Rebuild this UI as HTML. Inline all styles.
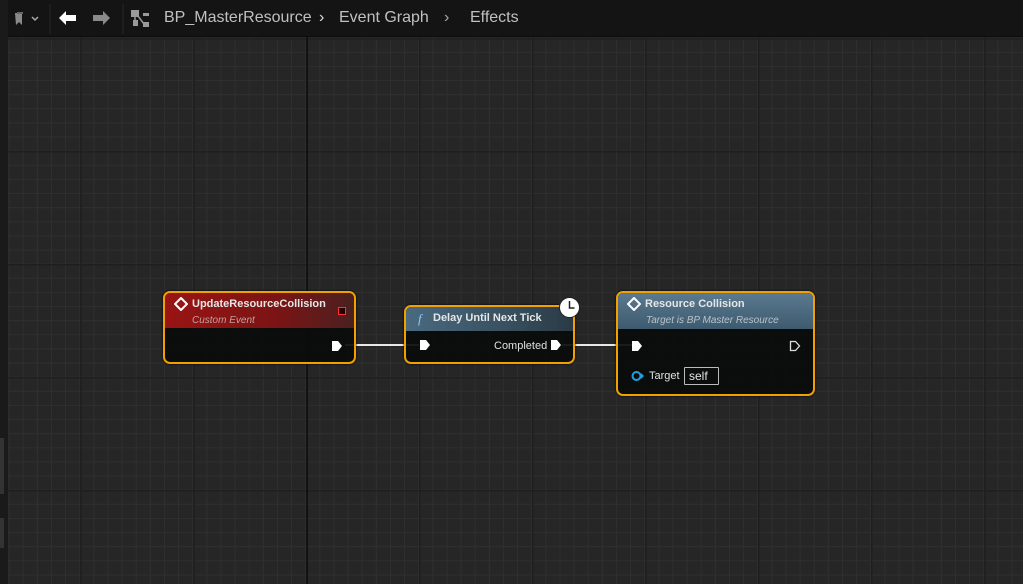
<!DOCTYPE html>
<html><head><meta charset="utf-8"><style>
*{margin:0;padding:0;box-sizing:border-box}
body{width:1023px;height:584px;overflow:hidden;background:#262626;font-family:"Liberation Sans",sans-serif;position:relative}
.grid{position:absolute;left:8px;top:37px;right:0;bottom:0;
background:
linear-gradient(to right,#1f1f1f 1.5px,transparent 1.5px) 72px 0/113px 113px,
linear-gradient(to bottom,#1f1f1f 1.5px,transparent 1.5px) 0 1px/113px 113px,
linear-gradient(to right,#2f2f2f 1px,transparent 1px) 0.6px 0/14.125px 14.125px,
linear-gradient(to bottom,#2f2f2f 1px,transparent 1px) 0 0.7px/14.125px 14.125px,#262626}
.left{position:absolute;left:0;top:0;width:8px;height:584px;background:#1a1a1a}
.tb{position:absolute;left:8px;top:0;right:0;height:37px;background:#141414;border-bottom:1px solid #0c0c0c}
.sep{position:absolute;top:4px;width:2px;height:30px;background:#1e1e1e}
.t{position:absolute;color:#c0c0c0;font-size:16px;top:9px}
.node{position:absolute;border:2px solid #f0a000;border-radius:7px;background:rgba(10,12,12,.93);overflow:hidden;box-shadow:0 0 2px #000}
.hd{position:absolute;left:0;right:0;top:0}
.title{position:absolute;color:#e6e6e6;font-weight:bold;font-size:11px}
.sub{position:absolute;color:#c0a0a0;font-style:italic;font-size:10px}
.wire{position:absolute;height:2px;background:#e8e8e8}
.pin{position:absolute}
</style></head><body>
<div class="grid"></div>
<div style="position:absolute;left:306px;top:37px;width:1.5px;height:547px;background:#121212"></div>
<div class="left"></div>
<div style="position:absolute;left:0;top:438px;width:4px;height:56px;background:#333"></div>
<div style="position:absolute;left:0;top:518px;width:4px;height:30px;background:#333"></div>
<div class="tb">
<svg style="position:absolute;left:6px;top:11px" width="30" height="16"><path d="M1 2h7v12l-3-3-3 3z" fill="#8a8a8a"/><path d="M3 1h6v2H3z" fill="#666"/><path d="M18 6l3 3 3-3" stroke="#aaa" stroke-width="1.5" fill="none"/></svg>
<div class="sep" style="left:41px"></div>
<svg style="position:absolute;left:50px;top:10px" width="20" height="16"><path d="M1 8l7-7v4h10v6H8v4z" fill="#fff"/></svg>
<svg style="position:absolute;left:83px;top:10px" width="20" height="16"><path d="M19 8l-7-7v4H2v6h10v4z" fill="#8a8a8a"/></svg>
<div class="sep" style="left:114px"></div>
<svg style="position:absolute;left:122px;top:9px" width="22" height="20"><rect x="1" y="1" width="8" height="7" fill="#9a9a9a"/><rect x="13" y="4" width="6" height="3" fill="#9a9a9a"/><rect x="13" y="13" width="6" height="5" fill="#9a9a9a"/><rect x="3" y="11" width="5" height="6" fill="#9a9a9a"/><path d="M8 7l6 8M5 8v4" stroke="#9a9a9a" stroke-width="1.5"/></svg>
<div class="t" style="left:156px">BP_MasterResource</div>
<div class="t" style="left:311px;color:#ddd">›</div>
<div class="t" style="left:331px">Event Graph</div>
<div class="t" style="left:436px;color:#aaa">›</div>
<div class="t" style="left:462px">Effects</div>
</div>

<div class="wire" style="left:345px;top:344px;width:74px"></div>
<div class="wire" style="left:562px;top:344px;width:71px"></div>

<div class="node" style="left:163px;top:291px;width:193px;height:73px">
<div class="hd" style="height:35px;background:linear-gradient(to right,#9a1414,#7a1414 60%,#4a2020)"></div>
<svg style="position:absolute;left:9px;top:4px" width="14" height="14"><path d="M7 1l6 6-6 6-6-6z" fill="none" stroke="#fff" stroke-width="2"/></svg>
<div class="title" style="left:27px;top:5px">UpdateResourceCollision</div>
<div class="sub" style="left:27px;top:22px">Custom Event</div>
<div style="position:absolute;left:173px;top:14px;width:8px;height:8px;border:1.5px solid #ff3030;background:#200"></div>
<svg class="pin" style="left:166px;top:47px" width="12" height="12"><path d="M1 1h6l4 5-4 5H1z" fill="#fff"/></svg>
</div>

<div class="node" style="left:404px;top:305px;width:171px;height:59px">
<div class="hd" style="height:24px;background:linear-gradient(to right,#4a6a80,#38505f 60%,#2a3a45)"></div>
<div style="position:absolute;left:12px;top:4px;color:#8cc8ff;font-style:italic;font-family:'Liberation Serif',serif;font-size:13px">f</div>
<div class="title" style="left:27px;top:5px">Delay Until Next Tick</div>
<svg class="pin" style="left:13px;top:32px" width="12" height="12"><path d="M1 1h6l4 5-4 5H1z" fill="#fff"/></svg>
<div style="position:absolute;left:88px;top:33px;color:#e0e0e0;font-size:11px">Completed</div>
<svg class="pin" style="left:144px;top:32px" width="12" height="12"><path d="M1 1h6l4 5-4 5H1z" fill="#fff"/></svg>
</div>
<svg style="position:absolute;left:558px;top:296px" width="23" height="23"><circle cx="11.5" cy="11.5" r="10" fill="#fff" stroke="#222" stroke-width="1"/><path d="M11.5 5v7h5" stroke="#222" stroke-width="1.5" fill="none"/></svg>

<div class="node" style="left:616px;top:291px;width:199px;height:105px">
<div class="hd" style="height:36px;background:linear-gradient(to bottom,#5a7a90,#3e5a6e)"></div>
<svg style="position:absolute;left:9px;top:4px" width="14" height="14"><path d="M7 1l6 6-6 6-6-6z" fill="none" stroke="#fff" stroke-width="2"/></svg>
<div class="title" style="left:27px;top:5px">Resource Collision</div>
<div class="sub" style="left:28px;top:22px;color:#b8c4cc">Target is BP Master Resource</div>
<svg class="pin" style="left:13px;top:47px" width="12" height="12"><path d="M1 1h6l4 5-4 5H1z" fill="#fff"/></svg>
<svg class="pin" style="left:171px;top:47px" width="12" height="12"><path d="M1.5 1.5h5l4 4.5-4 4.5h-5z" fill="none" stroke="#ddd" stroke-width="1.3"/></svg>
<svg class="pin" style="left:13px;top:77px" width="14" height="12"><circle cx="5.5" cy="6" r="4" fill="none" stroke="#1ea0e0" stroke-width="2"/><path d="M10 3l3 3-3 3z" fill="#1ea0e0"/></svg>
<div style="position:absolute;left:31px;top:77px;color:#e0e0e0;font-size:11px">Target</div>
<div style="position:absolute;left:66px;top:74px;width:35px;height:18px;border:1px solid #bbb;border-radius:1px;color:#e6e6e6;font-size:12px;padding:1px 0 0 4px">self</div>
</div>
</body></html>
